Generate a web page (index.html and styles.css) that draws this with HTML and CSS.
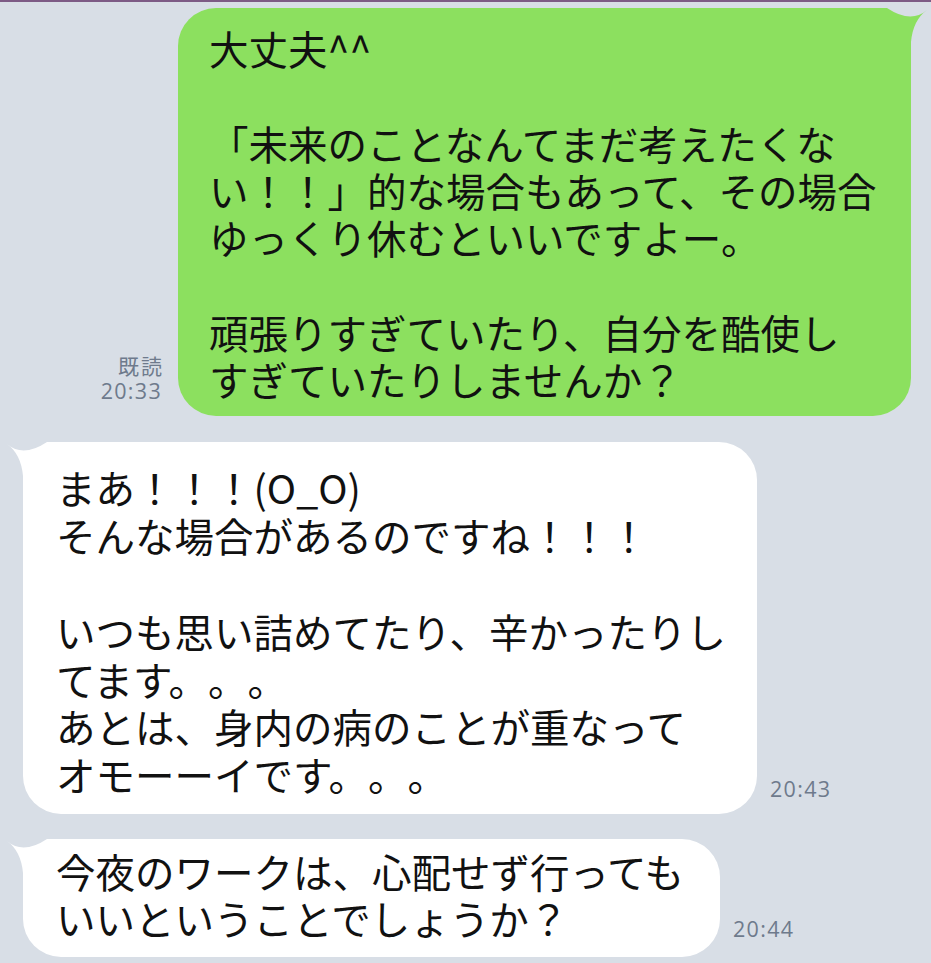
FILE: index.html
```html
<!DOCTYPE html>
<html lang="ja">
<head>
<meta charset="utf-8">
<link rel="stylesheet" href="styles.css">
</head>
<body>
<div class="chat">
  <div class="row row-out">
    <div class="meta">
      <div class="read">既読</div>
      <div>20:33</div>
    </div>
    <div class="bubble bubble-out b1">
      <svg class="tail tail-out" viewBox="-18 0 58 40" width="58" height="40"><path d="M-16 2 Q0 16 24 0 L40 0 L40 40 L0 40 L0 34 Q-2 12 -16 2 Z"/></svg>
      <p class="text">大丈夫^^<br><br>「未来のことなんてまだ考えたくな<br>い！！」的な場合もあって、その場合<br>ゆっくり休むといいですよー。<br><br>頑張りすぎていたり、自分を酷使し<br>すぎていたりしませんか？</p>
    </div>
  </div>
  <div class="row row-in r2">
    <div class="bubble bubble-in b2">
      <svg class="tail tail-in" viewBox="-18 0 58 40" width="58" height="40"><path d="M-16 2 Q0 16 24 0 L40 0 L40 40 L0 40 L0 34 Q-2 12 -16 2 Z"/></svg>
      <p class="text">まあ！！！(O_O)<br>そんな場合があるのですね！！！<br><br>いつも思い詰めてたり、辛かったりし<br>てます。。。<br>あとは、身内の病のことが重なって<br>オモーーイです。。。</p>
    </div>
    <div class="meta meta-in">20:43</div>
  </div>
  <div class="row row-in r3">
    <div class="bubble bubble-in b3">
      <svg class="tail tail-in" viewBox="-18 0 58 40" width="58" height="40"><path d="M-16 2 Q0 16 24 0 L40 0 L40 40 L0 40 L0 34 Q-2 12 -16 2 Z"/></svg>
      <p class="text">今夜のワークは、心配せず行っても<br>いいということでしょうか？</p>
    </div>
    <div class="meta meta-in meta-last">20:44</div>
  </div>
</div>
</body>
</html>
```
FILE: styles.css
```css
html, body {
  margin: 0;
  padding: 0;
  background: #d8dee6;
}
body {
  border-top: 2px solid #7d5b85;
  min-height: 961px;
  font-family: "Noto Sans CJK JP", "Noto Sans", sans-serif;
  color: #111;
}
.chat {
  display: flex;
  flex-direction: column;
  padding: 6px 20px 0 23px;
}
.row {
  display: flex;
  align-items: flex-end;
}
.row-out {
  justify-content: flex-end;
  gap: 16px;
}
.row-in {
  gap: 13px;
}
.r2 { margin-top: 26px; }
.r3 { margin-top: 25px; }
.bubble {
  position: relative;
  border-radius: 38px;
  box-sizing: border-box;
}
.bubble-out {
  background: #8ce05f;
  fill: #8ce05f;
}
.bubble-in {
  background: #ffffff;
  fill: #ffffff;
}
.tail {
  position: absolute;
  top: 0;
}
.tail-in {
  left: -18px;
}
.tail-out {
  right: -18px;
  transform: scaleX(-1);
}
.text {
  position: relative;
  margin: 0;
  font-size: 39.5px;
  white-space: nowrap;
  text-spacing-trim: space-all;
  font-feature-settings: "palt" 0, "halt" 0;
}
.b1 {
  width: 733px;
  padding: 16px 20px 14px 31px;
}
.b1 .text { line-height: 47.3px; }
.b2 {
  width: 734px;
  padding: 21px 20px 16px 33px;
}
.b2 .text { line-height: 47.8px; }
.b3 {
  width: 697px;
  padding: 8px 20px 15px 33px;
}
.b3 .text { line-height: 47.5px; }
.meta {
  font-family: "Open Sans", "Noto Sans", "Noto Sans CJK JP", sans-serif;
  font-size: 21.5px;
  line-height: 26px;
  letter-spacing: 1.3px;
  color: #6e7a8c;
  text-align: right;
  margin-bottom: 12px;
}
.read {
  font-family: "Noto Sans CJK JP", sans-serif;
  font-size: 21px;
  letter-spacing: 2px;
  margin-right: -2px;
}
.meta-in {
  margin-bottom: 12px;
}
.meta-last {
  margin-bottom: 15px;
}
```
